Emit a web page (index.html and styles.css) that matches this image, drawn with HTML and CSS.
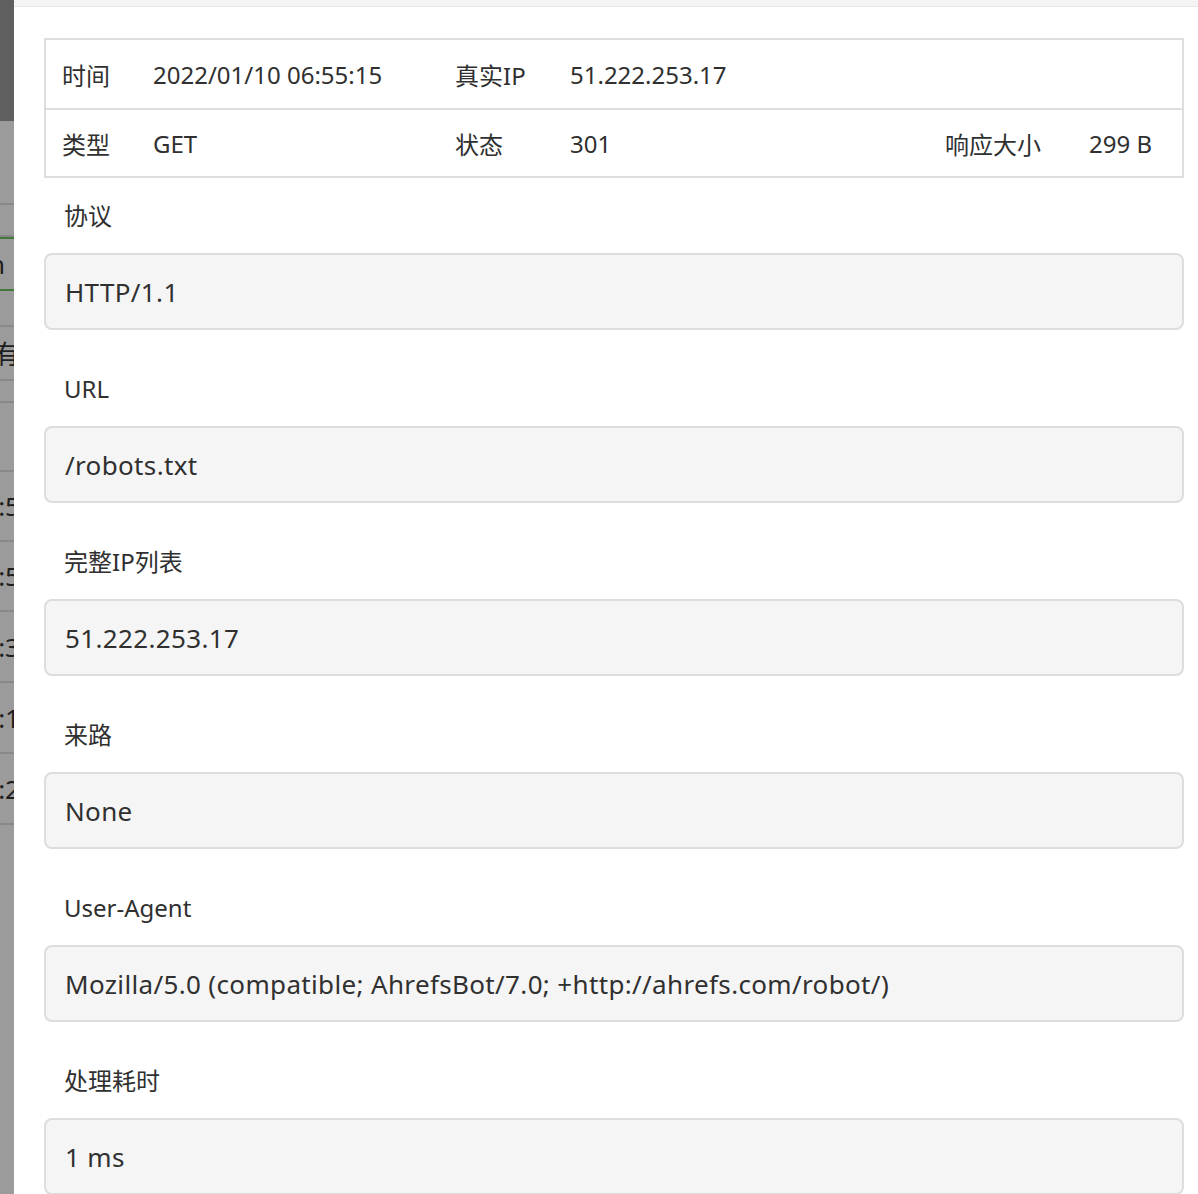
FILE: index.html
```html
<!DOCTYPE html>
<html lang="zh">
<head>
<meta charset="utf-8">
<title>请求详情</title>
<link rel="stylesheet" href="styles.css">
</head>
<body>
<div class="page">
  <aside class="backdrop">
    <div class="bd-top"></div>
    <div class="bd-row" style="height:84px"></div>
    <div class="bd-row" style="height:32px"></div>
    <div class="bd-row green" style="height:54px"><span class="frag frag-n">n</span></div>
    <div class="bd-row green2" style="height:36px"></div>
    <div class="bd-row" style="height:54px"><span class="frag">所有</span></div>
    <div class="bd-row" style="height:22px"></div>
    <div class="bd-row" style="height:69px"></div>
    <div class="bd-row" style="height:70px"><span class="frag">06:5</span></div>
    <div class="bd-row" style="height:70px"><span class="frag">06:5</span></div>
    <div class="bd-row" style="height:71px"><span class="frag">06:3</span></div>
    <div class="bd-row" style="height:71px"><span class="frag">06:1</span></div>
    <div class="bd-row" style="height:71px"><span class="frag">06:2</span></div>
  </aside>
  <main class="panel">
    <div class="panel-head"></div>
    <div class="panel-body">
      <div class="info">
        <div class="info-row">
          <span class="k">时间</span><span class="v">2022/01/10 06:55:15</span>
          <span class="k">真实IP</span><span class="v">51.222.253.17</span>
          <span></span><span></span>
        </div>
        <div class="info-row">
          <span class="k">类型</span><span class="v">GET</span>
          <span class="k">状态</span><span class="v">301</span>
          <span class="k">响应大小</span><span class="v">299 B</span>
        </div>
      </div>
      <div class="field">
        <div class="label">协议</div>
        <div class="box">HTTP/1.1</div>
      </div>
      <div class="field">
        <div class="label">URL</div>
        <div class="box">/robots.txt</div>
      </div>
      <div class="field">
        <div class="label">完整IP列表</div>
        <div class="box">51.222.253.17</div>
      </div>
      <div class="field">
        <div class="label">来路</div>
        <div class="box">None</div>
      </div>
      <div class="field">
        <div class="label">User-Agent</div>
        <div class="box">Mozilla/5.0 (compatible; AhrefsBot/7.0; +http://ahrefs.com/robot/)</div>
      </div>
      <div class="field">
        <div class="label">处理耗时</div>
        <div class="box">1 ms</div>
      </div>
    </div>
  </main>
</div>
</body>
</html>
```
FILE: styles.css
```css
html, body {
  margin: 0;
  padding: 0;
  background: #ffffff;
  overflow: hidden;
}
body {
  font-family: "Noto Sans", "Noto Sans CJK SC", sans-serif;
  color: #303030;
  font-size: 26px;
}
.page {
  display: flex;
  width: 1198px;
  height: 1194px;
  overflow: hidden;
}
.backdrop {
  width: 14px;
  flex: none;
  background: #9b9b9b;
  display: flex;
  flex-direction: column;
  overflow: hidden;
}
.bd-top {
  height: 121px;
  background: #5f5f5f;
  flex: none;
}
.bd-row {
  flex: none;
  box-sizing: border-box;
  border-bottom: 2px solid #888888;
  display: flex;
  align-items: center;
  justify-content: flex-end;
  overflow: hidden;
  white-space: nowrap;
}
.bd-row.green { border-top: 2px solid #3f7a36; border-bottom: 2px solid #3f7a36; }
.bd-row.green2 { border-bottom: 2px solid #8a8a8a; }
.frag {
  color: #1e1e1e;
  font-size: 26px;
  margin-right: -6px;
}
.frag-n { margin-right: 9px; }
.panel {
  flex: 1;
  display: flex;
  flex-direction: column;
  background: #ffffff;
}
.panel-head {
  height: 6px;
  background: #f4f4f4;
  border-bottom: 1px solid #e9e9e9;
  flex: none;
}
.panel-body {
  padding: 31px 14px 0 30px;
}
.info {
  border: 2px solid #dddddd;
  font-size: 24px;
}
.info-row {
  display: grid;
  grid-template-columns: 91px 302px 115px 375px 144px 1fr;
  align-items: center;
  height: 68px;
}
.info-row + .info-row {
  border-top: 2px solid #dddddd;
  height: 66px;
}
.info-row span {
  padding-left: 16px;
  white-space: nowrap;
}
.field {
  display: flex;
  flex-direction: column;
}
.info + .field { margin-top: 20px; }
.label {
  height: 36px;
  line-height: 36px;
  padding-left: 20px;
  margin-bottom: 19px;
  font-size: 24px;
}
.box {
  box-sizing: border-box;
  height: 77px;
  border: 2px solid #dddddd;
  border-radius: 8px;
  background: #f5f5f5;
  padding: 0 19px;
  display: flex;
  align-items: center;
  margin-bottom: 41px;
  white-space: nowrap;
  letter-spacing: 0.35px;
}
```
